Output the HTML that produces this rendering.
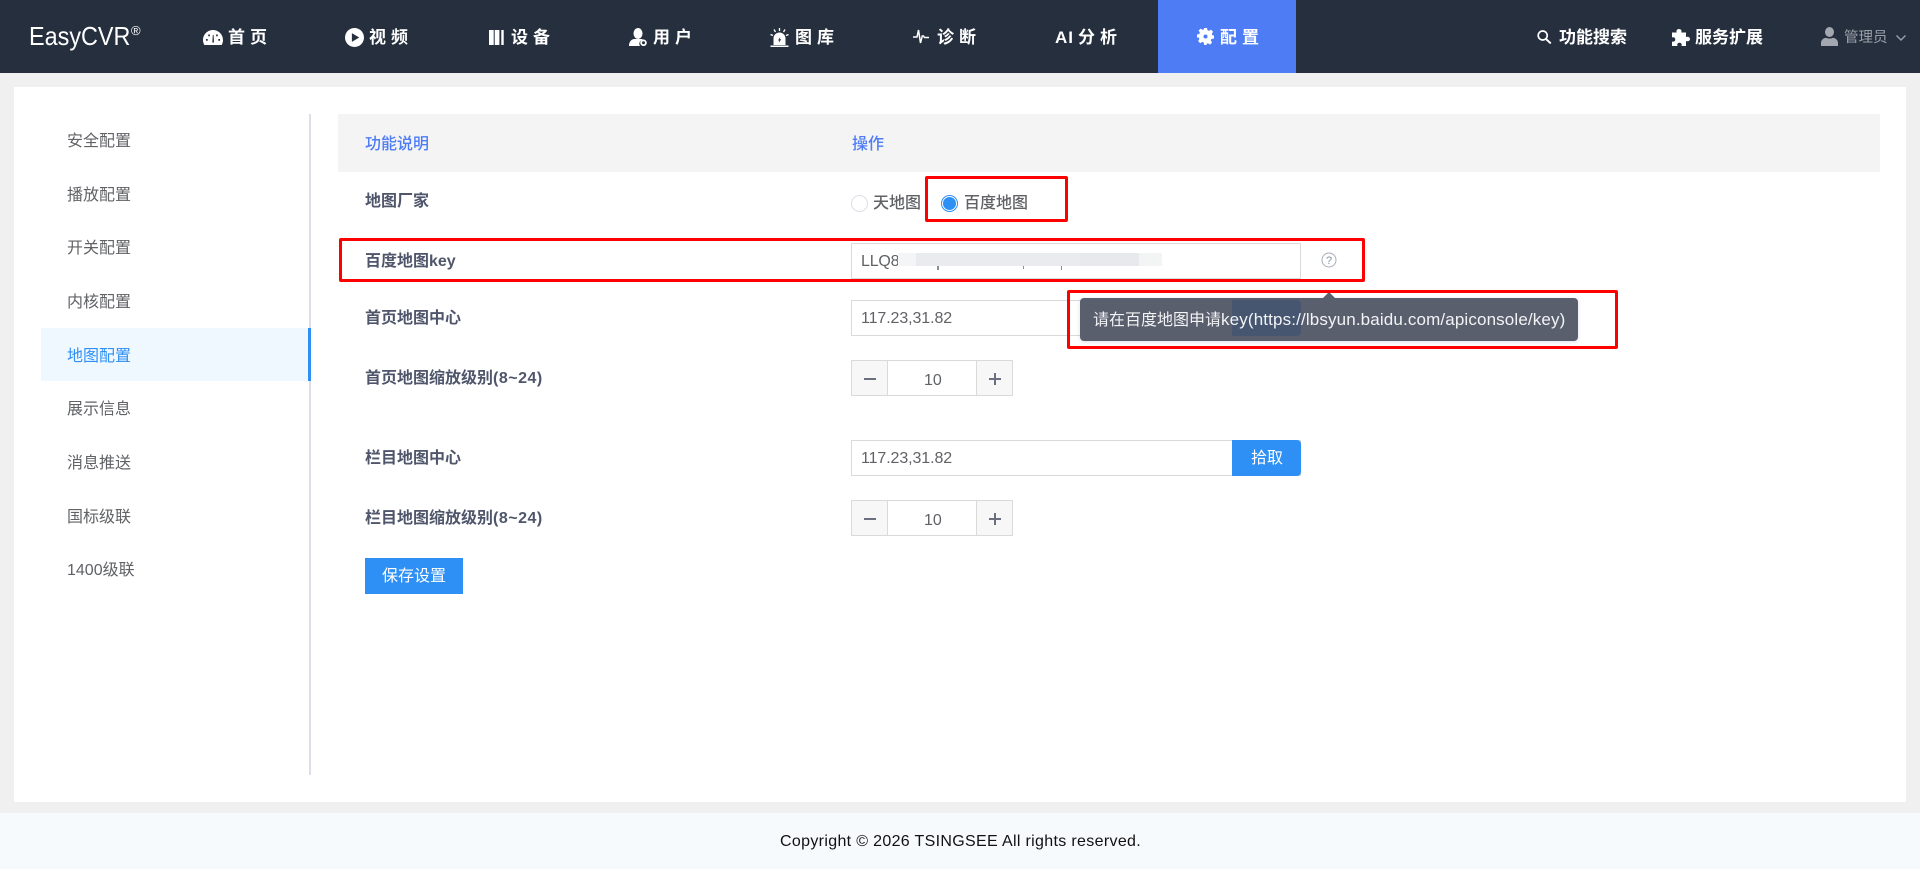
<!DOCTYPE html>
<html lang="zh"><head><meta charset="utf-8"><title>EasyCVR</title>
<style>
html,body{margin:0;padding:0}
body{position:relative;width:1920px;height:869px;overflow:hidden;background:#f0f0f0;font-family:"Liberation Sans","Noto Sans CJK SC",sans-serif;color:#606266}
div,span.a,svg{position:absolute}
.t{white-space:nowrap;line-height:16px;font-size:16px}
.n{color:#fff;font-weight:700;letter-spacing:5px;top:30px;font-size:17px}
.s{left:67px}
.l{left:365px;color:#4f566b;font-weight:700}
.b{box-sizing:border-box;border:1px solid #dadada;background:#fff}
.r{box-sizing:border-box;border:3px solid #f00;border-radius:2px}
.g{box-sizing:border-box;border:1px solid #dadada;background:#f7f7f7;width:37px;height:36px}
.e{letter-spacing:.5px}
</style></head><body>
<!-- header -->
<div style="left:0;top:0;width:1920px;height:73px;background:#262f3e"></div>
<div style="left:1158px;top:0;width:138px;height:73px;background:#4d7cf5"></div>
<div class="t" style="left:29px;top:22px;font-size:26px;line-height:28px;color:#fff;transform:scaleX(.9);transform-origin:0 0">EasyCVR</div>
<div class="t" style="left:131px;top:24px;font-size:13px;line-height:13px;color:#fff">®</div>

<svg style="left:203px;top:30px" width="20" height="15" viewBox="0 0 20 15"><path fill="#fff" d="M10 0C4.500 0 0 4.500 0 10c0 1.800.5 3.400 1.300 5h17.400c.8-1.600 1.300-3.200 1.300-5C20 4.500 15.500 0 10 0z"/><path fill="#262f3e" d="M9.300 12.500l.5-7.500h.8l.4 7.500zM3 9h1.700v1.700H3zM15.300 9H17v1.700h-1.700zM5.200 4.500h1.700v1.700H5.200zM13.100 4.500h1.700v1.700h-1.700z"/></svg>
<div class="t n" style="left:228px">首页</div>
<svg style="left:345px;top:28px" width="19" height="19" viewBox="0 0 18 18"><circle cx="9" cy="9" r="9" fill="#fff"/><path fill="#262f3e" d="M6.500 4.800v8.400L13.500 9z"/></svg>
<div class="t n" style="left:369px">视频</div>
<svg style="left:489px;top:30px" width="15" height="15" viewBox="0 0 15 15"><path fill="#fff" d="M0 0h4.700v15H0zM5.700 0h4.700v15H5.700zM12.300 0h2.400v15h-2.400z"/></svg>
<div class="t n" style="left:511px">设备</div>
<svg style="left:629px;top:28px" width="18" height="18" viewBox="0 0 18 18"><ellipse cx="9" cy="5.500" rx="4.500" ry="5.500" fill="#fff"/><path fill="#fff" d="M0 18c0-4 2-6.500 5-7h8c.5.300.8.500 1 .8a4 4 0 0 0-3 6.200z"/><circle cx="14.500" cy="14.800" r="2.400" fill="none" stroke="#fff" stroke-width="1.800"/></svg>
<div class="t n" style="left:653px">用户</div>
<svg style="left:770px;top:28px" width="19" height="19" viewBox="0 0 19 19"><path fill="#fff" d="M3.500 17V10.500a6 6 0 0 1 12 0V17zM0.500 17.500h18V19H.5z"/><path fill="#262f3e" d="M10.200 9l-2.200 3.500H9.300l-.6 2.500 2.500-3.700H9.800z"/><path stroke="#fff" stroke-width="1.300" fill="none" d="M9.500 0v3M4 1.500l1.500 2.500M15 1.500l-1.500 2.500M.5 6.500l2.500 1M18.500 6.500l-2.500 1"/></svg>
<div class="t n" style="left:795px">图库</div>
<svg style="left:913px;top:29px" width="16" height="15" viewBox="0 0 16 15"><path fill="none" stroke="#fff" stroke-width="1.500" d="M0 8h4l1.500-7 2 13 1.800-7h1.200l1 1.500H16"/></svg>
<div class="t n" style="left:937px">诊断</div>
<div class="t n" style="left:1055px;letter-spacing:1px">AI</div>
<div class="t n" style="left:1078px">分析</div>
<svg style="left:1197px;top:28px" width="17" height="17" viewBox="0 0 17 17"><path fill="#fff" d="M7 0h3l.5 2.300 1.500.6 2-1.300 2.100 2.100-1.300 2 .6 1.500L17 7.500v3l-2.600.5-.6 1.500 1.300 2-2.100 2.100-2-1.300-1.500.6L9.800 17H7.200l-.5-2.500-1.500-.6-2 1.300L1.100 13l1.300-2-.6-1.500L0 9.500v-3l2.300-.5.6-1.500-1.300-2L3.700.6l2 1.300L7 1.300z"/><circle cx="8.500" cy="8.500" r="2" fill="#4d7cf5"/></svg>
<div class="t n" style="left:1220px">配置</div>

<svg style="left:1537px;top:30px" width="15" height="14" viewBox="0 0 15 14"><circle cx="5.700" cy="5.500" r="4.500" fill="none" stroke="#fff" stroke-width="1.700"/><path stroke="#fff" stroke-width="1.900" d="M9 9l4.800 4.500"/></svg>
<div class="t" style="left:1559px;top:30px;color:#fff;font-weight:700;font-size:17px">功能搜索</div>
<svg style="left:1672px;top:29px" width="18" height="17" viewBox="0 0 18 17"><path fill="#fff" d="M7 0c2 0 3 1.500 2.300 3.500H14v4.500c2-.8 4 .2 4 2s-2 2.800-4 2V17H9.500c.7-2-.4-3.200-2-3.200S4.700 15 5.500 17H0V12.500c2 .7 3.300-.5 3.300-2S2 7.700 0 8.500V3.500h4.700C4 1.500 5 0 7 0z"/></svg>
<div class="t" style="left:1695px;top:30px;color:#fff;font-weight:700;font-size:17px">服务扩展</div>
<svg style="left:1821px;top:27px" width="17" height="19" viewBox="0 0 17 19"><ellipse cx="8.500" cy="5" rx="4.500" ry="5" fill="#a3a8b0"/><path fill="#a3a8b0" d="M0 19v-3c0-3 2.500-4.800 5-5.200 2 1 5 1 7 0 2.500.4 5 2.200 5 5.200v3z"/></svg>
<div class="t" style="left:1844px;top:30px;color:#9aa0aa;font-size:14.500px">管理员</div>
<svg style="left:1896px;top:35px" width="10" height="6" viewBox="0 0 10 6"><path fill="none" stroke="#9aa0aa" stroke-width="1.400" d="M.5.500L5 5 9.500.500"/></svg>

<!-- main panel -->
<div style="left:14px;top:87px;width:1892px;height:715px;background:#fff"></div>
<div style="left:0;top:813px;width:1920px;height:56px;background:#f6fafd"></div>
<div class="t" style="left:780px;top:834px;color:#111;letter-spacing:.33px">Copyright © 2026 TSINGSEE All rights reserved.</div>

<!-- sidebar -->
<div style="left:309px;top:114px;width:2px;height:661px;background:#dcdfe6"></div>
<div style="left:41px;top:328px;width:270px;height:53px;background:#f0f8ff"></div>
<div style="left:308px;top:328px;width:3px;height:53px;background:#2e8ff5"></div>
<div class="t s" style="top:134px">安全配置</div>
<div class="t s" style="top:188px">播放配置</div>
<div class="t s" style="top:241px">开关配置</div>
<div class="t s" style="top:295px">内核配置</div>
<div class="t s" style="top:349px;color:#2e8ff5">地图配置</div>
<div class="t s" style="top:402px">展示信息</div>
<div class="t s" style="top:456px">消息推送</div>
<div class="t s" style="top:510px">国标级联</div>
<div class="t s" style="top:563px">1400级联</div>

<!-- table head -->
<div style="left:338px;top:114px;width:1542px;height:58px;background:#f4f4f4"></div>
<div class="t" style="left:365px;top:137px;color:#4d7cf5;font-weight:500">功能说明</div>
<div class="t" style="left:852px;top:137px;color:#4d7cf5;font-weight:500">操作</div>

<!-- labels -->
<div class="t l" style="top:194px">地图厂家</div>
<div class="t l" style="top:254px">百度地图key</div>
<div class="t l" style="top:311px">首页地图中心</div>
<div class="t l" style="top:371px">首页地图缩放级别<span class="e">(8~24)</span></div>
<div class="t l" style="top:451px">栏目地图中心</div>
<div class="t l" style="top:511px">栏目地图缩放级别<span class="e">(8~24)</span></div>

<!-- radios -->
<div style="left:851px;top:195px;width:17px;height:17px;box-sizing:border-box;border:1px solid #dcdfe6;border-radius:50%"></div>
<div class="t" style="left:873px;top:196px;font-weight:500">天地图</div>
<div style="left:941px;top:195px;width:17px;height:17px;box-sizing:border-box;border:1px solid #2e8ff5;border-radius:50%"></div>
<div style="left:943px;top:197px;width:13px;height:13px;background:#2e8ff5;border-radius:50%"></div>
<div class="t" style="left:964px;top:196px;font-weight:500">百度地图</div>

<!-- key input -->
<div class="b" style="left:851px;top:243px;width:450px;height:36px"></div>
<div class="t" style="left:861px;top:254px;letter-spacing:-.2px">LLQ8</div>
<div style="left:937px;top:266px;width:2px;height:4px;background:#8a8e99"></div>
<div style="left:1023px;top:266px;width:1px;height:3px;background:#8a8e99"></div>
<div style="left:1061px;top:266px;width:1px;height:4px;background:#8a8e99"></div>
<div style="left:898px;top:253px;width:18px;height:13px;background:#f4f5f6"></div>
<div style="left:916px;top:253px;width:164px;height:13px;background:#e9ebee"></div>
<div style="left:1080px;top:253px;width:59px;height:13px;background:#e8e9ed"></div>
<div style="left:1139px;top:253px;width:23px;height:13px;background:#f3f5f5"></div>
<svg style="left:1321px;top:252px" width="16" height="16" viewBox="0 0 16 16"><circle cx="8" cy="8" r="7" fill="none" stroke="#a7adb8" stroke-width="1"/><text x="8" y="12" font-size="11" text-anchor="middle" fill="#8a909c" font-family="Liberation Sans">?</text></svg>

<!-- center input 1 -->
<div class="b" style="left:851px;top:300px;width:450px;height:36px"></div>
<div class="t" style="left:861px;top:311px;letter-spacing:-.1px">117.23,31.82</div>

<!-- stepper 1 -->
<div class="b" style="left:851px;top:360px;width:162px;height:36px"></div>
<div class="g" style="left:851px;top:360px"></div>
<div class="g" style="left:976px;top:360px"></div>
<div style="left:864px;top:378px;width:12px;height:2px;background:#6b7080"></div>
<div style="left:989px;top:378px;width:12px;height:2px;background:#6b7080"></div>
<div style="left:994px;top:373px;width:2px;height:12px;background:#6b7080"></div>
<div class="t" style="left:924px;top:373px">10</div>

<!-- center input 2 -->
<div class="b" style="left:851px;top:440px;width:450px;height:36px"></div>
<div class="t" style="left:861px;top:451px;letter-spacing:-.1px">117.23,31.82</div>
<div style="left:1232px;top:440px;width:69px;height:36px;background:#2e8ff5;border-radius:0 4px 4px 0"></div>
<div class="t" style="left:1251px;top:451px;color:#fff">拾取</div>

<!-- stepper 2 -->
<div class="b" style="left:851px;top:500px;width:162px;height:36px"></div>
<div class="g" style="left:851px;top:500px"></div>
<div class="g" style="left:976px;top:500px"></div>
<div style="left:864px;top:518px;width:12px;height:2px;background:#6b7080"></div>
<div style="left:989px;top:518px;width:12px;height:2px;background:#6b7080"></div>
<div style="left:994px;top:513px;width:2px;height:12px;background:#6b7080"></div>
<div class="t" style="left:924px;top:513px">10</div>

<!-- save -->
<div style="left:365px;top:558px;width:98px;height:36px;background:#2e8ff5"></div>
<div class="t" style="left:382px;top:569px;color:#fff">保存设置</div>

<!-- tooltip -->
<div style="left:1080px;top:298px;width:498px;height:43px;background:#5a5f6e;border-radius:4px;box-shadow:0 1px 4px rgba(0,0,0,.12)"></div>
<div style="left:1232px;top:300px;width:69px;height:36px;background:#465670;border-radius:0 4px 4px 0"></div>
<svg style="left:1322px;top:292px" width="14" height="7" viewBox="0 0 14 7"><path fill="#5a5f6e" d="M0 7L7 0l7 7z"/></svg>
<div class="t" style="left:1093px;top:312px;color:#f2f3f5">请在百度地图申请<span style="font-size:17px;letter-spacing:.14px">key(https://lbsyun.baidu.com/apiconsole/key)</span></div>

<!-- red boxes -->
<div class="r" style="left:925px;top:176px;width:143px;height:46px"></div>
<div class="r" style="left:339px;top:238px;width:1026px;height:44px"></div>
<div class="r" style="left:1067px;top:290px;width:551px;height:59px"></div>
</body></html>
